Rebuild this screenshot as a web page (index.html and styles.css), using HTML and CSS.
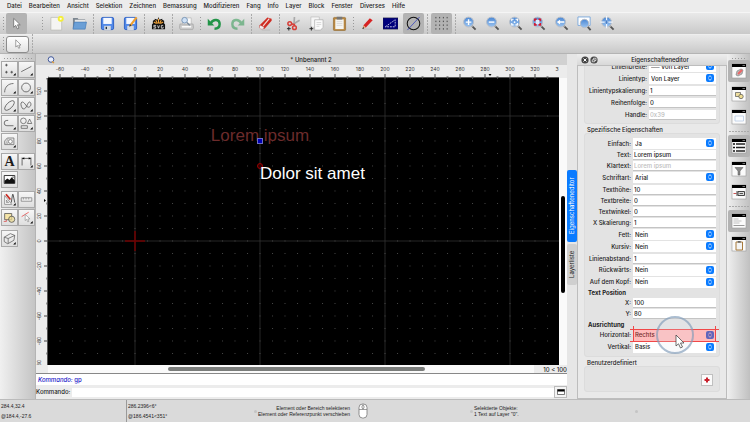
FILE: index.html
```html
<!DOCTYPE html>
<html lang="de">
<head>
<meta charset="utf-8">
<title>Unbenannt 2</title>
<link rel="stylesheet" href="styles.css">
</head>
<body>
<svg class="defs" aria-hidden="true">
  <defs>
    <linearGradient id="lens" x1="0" y1="0" x2="0" y2="1"><stop offset="0" stop-color="#4a87d4"/><stop offset="1" stop-color="#9cc4f0"/></linearGradient>
    <symbol id="cursor" viewBox="0 0 16 16"><path d="M5 2.500v9.500l2.200-2 1.700 3.700 1.700-.8L9 9.400h3z" fill="#fff" stroke="#666" stroke-width=".8"/></symbol>
    <symbol id="mag" viewBox="0 0 16 16"><path d="M10.500 10.500l4 4" stroke="#555" stroke-width="2"/><path d="M10 10l1.500 1.500" stroke="#aaa" stroke-width="1.500"/><circle cx="7" cy="6.500" r="5.300" fill="url(#lens)" stroke="#b9bdc4" stroke-width="1"/></symbol>
    <symbol id="updown" viewBox="0 0 8 8"><path d="M2.300 3.300L4 1.700l1.700 1.600M2.300 4.700L4 6.300l1.700-1.600" fill="none" stroke="#fff" stroke-width=".8"/></symbol>
    <symbol id="win" viewBox="0 0 16 16"><rect x="1" y="1" width="14" height="14" fill="#fbfbfb" stroke="#999" stroke-width=".6"/><path d="M1 1h14v3H1z" fill="#000"/><path d="M11.500 2.500h2.500" stroke="#777"/></symbol>
    <symbol id="corner" viewBox="0 0 17 17"><path d="M15.500 12.500v2.800h-2.800z" fill="#000"/></symbol>
    <symbol id="close" viewBox="0 0 8 8"><circle cx="4" cy="4" r="3.600" fill="#444"/><path d="M2.500 2.500l3 3m0-3l-3 3" stroke="#fff" stroke-width="1"/></symbol>
  </defs>
</svg>

<nav class="menubar" aria-label="Menü">
  <a href="#">Datei</a><a href="#">Bearbeiten</a><a href="#">Ansicht</a><a href="#">Selektion</a><a href="#">Zeichnen</a><a href="#">Bemassung</a><a href="#">Modifizieren</a><a href="#">Fang</a><a href="#">Info</a><a href="#">Layer</a><a href="#">Block</a><a href="#">Fenster</a><a href="#">Diverses</a><a href="#">Hilfe</a>
</nav>

<div class="toolbar">
  <i class="grip"></i>
  <button class="tool active" aria-label="Auswahl"><svg viewBox="0 0 16 16"><use href="#cursor"/></svg></button>
  <i class="grip later"></i>
  <button class="tool" aria-label="Neu"><svg viewBox="0 0 16 16"><path d="M2 1.500h11.500v13.500H2z" fill="#f5f5f2" stroke="#b5b5b0" stroke-width=".7"/><circle cx="12.500" cy="3" r="3.200" fill="#f4ee3a"/><circle cx="12.500" cy="3" r="1.200" fill="#fffde0"/></svg></button>
  <button class="tool" aria-label="Öffnen"><svg viewBox="0 0 16 16"><path d="M1 2h5l1 1.500h7V13H1z" fill="#7d8790"/><path d="M3 4h11v4H3z" fill="#e8e8e8"/><path d="M2.500 6.500H15.500L14 14H1z" fill="#6b9fd6" stroke="#3c74b0" stroke-width=".6"/></svg></button>
  <i class="sep"></i>
  <button class="tool" aria-label="Speichern"><svg viewBox="0 0 16 16"><rect x="1.500" y="1.500" width="13" height="13" rx="1.500" fill="#5289e8" stroke="#2c5fc4"/><path d="M3.500 2h9v6.500h-9z" fill="#f5f8ff"/><path d="M4.500 10.500h7V15h-7z" fill="#d5dae2"/><path d="M6 11.500h1.500V14H6z" fill="#234"/></svg></button>
  <button class="tool" aria-label="Speichern unter"><svg viewBox="0 0 16 16"><rect x="1.500" y="1.500" width="13" height="13" rx="1.500" fill="#5289e8" stroke="#2c5fc4"/><path d="M3.500 2h9v6.500h-9z" fill="#f5f8ff"/><path d="M4.500 10.500h7V15h-7z" fill="#d5dae2"/><path d="M14.500 1.500L7.500 10.500" stroke="#f0a030" stroke-width="2.400"/><path d="M7.500 8.500l-1 3 2.500-1.500z" fill="#333"/></svg></button>
  <i class="sep"></i>
  <button class="tool" aria-label="SVG-Export"><svg viewBox="0 0 16 16"><path d="M2 8V5l2-1V3l3 1 1-3 1 3 3-1v1l2 1v3l1 1v5H1V9z" fill="#111"/><path d="M8 3v5M5 4.500L7 8M11 4.500L9 8M3 6.500l3 1.500M13 6.500L10 8" stroke="#f3a53a" stroke-width="1.200"/><path d="M5.500 10H3v1.500h2V13H2.500M7 10l1 3 1-3M13 10h-2v3h2v-1.500" fill="none" stroke="#ddd" stroke-width=".9"/></svg></button>
  <i class="sep"></i>
  <button class="tool" aria-label="Druckvorschau"><svg viewBox="0 0 16 16"><path d="M4 2h9v7H4z" fill="#fafafa" stroke="#aaa" stroke-width=".6"/><path d="M1 8.500h14l.5 4-1 2h-13l-1-2z" fill="#c9c9c9" stroke="#999" stroke-width=".6"/><path d="M3 11.500h10" stroke="#fff" stroke-width="1.500"/><circle cx="6" cy="4.500" r="3" fill="#cfe1f5" stroke="#7795b8"/><path d="M8.500 7l3 3" stroke="#789" stroke-width="1.500"/></svg></button>
  <i class="grip"></i>
  <button class="tool" aria-label="Rückgängig"><svg viewBox="0 0 16 16"><path d="M4 7.500C7 2.500 13.500 3.500 13.500 8.500c0 3-2 5-5.500 5" fill="none" stroke="#229447" stroke-width="2.600"/><path d="M.8 3v7h7z" fill="#229447"/></svg></button>
  <button class="tool faded" aria-label="Wiederherstellen"><svg viewBox="0 0 16 16"><path d="M12 7.500C9 2.500 2.500 3.500 2.500 8.500c0 3 2 5 5.500 5" fill="none" stroke="#229447" stroke-width="2.600"/><path d="M15.200 3v7h-7z" fill="#229447"/></svg></button>
  <i class="sep"></i>
  <button class="tool" aria-label="Löschen"><svg viewBox="0 0 16 16"><path d="M4 15h9" stroke="#bbb" stroke-width="1"/><path d="M10 1.500l4.500 1.500v2L7 13.500H3L1.500 12v-2z" fill="#cf2c22"/><path d="M12 2.800L5.500 10.500" stroke="#f3dcd8" stroke-width="1.300"/><path d="M2 9.800l4.500 1.800L5.500 14H3l-1.500-1.500z" fill="#f0eeee" stroke="#b66" stroke-width=".4"/></svg></button>
  <i class="sep"></i>
  <button class="tool" aria-label="Ausschneiden"><svg viewBox="0 0 16 16"><path d="M9 1L8.500 9M14.500 4.500L7 9" stroke="#aaa" stroke-width="1.800"/><circle cx="4" cy="8" r="2" fill="none" stroke="#d6403a" stroke-width="1.600"/><circle cx="9" cy="12.500" r="2" fill="none" stroke="#d6403a" stroke-width="1.600"/><path d="M6 8.500l3 .5v2" fill="none" stroke="#d6403a" stroke-width="1.500"/><path d="M3 11.500v4M1 13.500h4" stroke="#222" stroke-width="1"/></svg></button>
  <button class="tool" aria-label="Kopieren"><svg viewBox="0 0 16 16"><path d="M2 1h9v11H2z" fill="#f6f6f6" stroke="#bbb" stroke-width=".7"/><path d="M6 4h9v8l-2.500 3H6z" fill="#fbfbfb" stroke="#aaa" stroke-width=".7"/><path d="M8 7h5M8 9h5M8 11h3" stroke="#ccc" stroke-width=".8"/><path d="M2.500 11.500v4M.5 13.500h4" stroke="#222" stroke-width="1"/></svg></button>
  <button class="tool" aria-label="Einfügen"><svg viewBox="0 0 16 16"><rect x="1.500" y="1.500" width="13" height="14" rx="1" fill="#b8863f" stroke="#8c6226" stroke-width=".6"/><path d="M3.500 3.500h9v10.500h-9z" fill="#f5f5f2"/><path d="M5 .8h6v3H5z" fill="#777"/><path d="M5 6h6M5 8h6M5 10h6" stroke="#ccc" stroke-width=".7"/></svg></button>
  <i class="grip"></i>
  <button class="tool" aria-label="Stift"><svg viewBox="0 0 16 16"><path d="M3 14h10" stroke="#bbb"/><path d="M10.500 2.500l3 2-7 7.500-3.500 1 1-3.500z" fill="#d62222"/><path d="M4 10l-1.300 3.500L6 12z" fill="#e9c08a"/><path d="M3.300 11.800l-.8 2 2-.8z" fill="#111"/></svg></button>
  <button class="tool" aria-label="Entwurf"><svg viewBox="0 0 16 16"><path d="M0 2h16v12H0z" fill="#00007c" stroke="#223" stroke-width=".5"/><path d="M2.500 11.500L13 4v7.500z" fill="none" stroke="#dde" stroke-width=".9" stroke-dasharray="2 1"/></svg></button>
  <button class="tool active" aria-label="Hilfslinien"><svg viewBox="0 0 16 16"><circle cx="8" cy="8" r="6.700" fill="none" stroke="#111" stroke-width="1.100"/><path d="M1.500 15L14.500 1" stroke="#3340c0" stroke-width=".8"/></svg></button>
  <i class="sep"></i>
  <button class="tool active" aria-label="Raster"><svg viewBox="0 0 16 16"><path d="M2 1v15M6 1v15M10 1v15M14 1v15" stroke="#444" stroke-width="1" stroke-dasharray="1.500 2.500"/></svg></button>
  <i class="sep"></i>
  <button class="tool" aria-label="Vergrößern"><svg viewBox="0 0 16 16"><use href="#mag"/><path d="M7 3.500v6M4 6.500h6" stroke="#fff" stroke-width="1.500"/></svg></button>
  <button class="tool" aria-label="Verkleinern"><svg viewBox="0 0 16 16"><use href="#mag"/><path d="M4 6.500h6" stroke="#fff" stroke-width="1.500"/></svg></button>
  <button class="tool" aria-label="Auto-Zoom"><svg viewBox="0 0 16 16"><use href="#mag"/><path d="M4 5.500v-2h2M8 3.500h2v2M10 7.500v2H8M6 9.500H4v-2" fill="none" stroke="#fff" stroke-width="1.200"/><circle cx="7" cy="6.500" r="1" fill="#fff"/></svg></button>
  <button class="tool" aria-label="Auf Auswahl zoomen"><svg viewBox="0 0 16 16"><use href="#mag"/><path d="M5 4h4v5H5z" fill="#dce9fa"/><path d="M4 5.500v-2h2M8 3.500h2v2M10 7.500v2H8M6 9.500H4v-2" fill="none" stroke="#d31b31" stroke-width="1.700"/></svg></button>
  <button class="tool" aria-label="Vorherige Ansicht"><svg viewBox="0 0 16 16"><use href="#mag"/><path d="M3 6.500l3.500-2.500v1.700H11v1.600H6.500V9z" fill="#fff"/></svg></button>
  <button class="tool" aria-label="Fensterzoom"><svg viewBox="0 0 16 16"><path d="M1 1h13v9H1z" fill="#fff" stroke="#7aa7dc"/><path d="M11.500 11.500l3 3.500" stroke="#555" stroke-width="2"/><circle cx="8" cy="8" r="4.500" fill="url(#lens)" stroke="#b9bdc4"/></svg></button>
  <button class="tool" aria-label="Verschieben"><svg viewBox="0 0 16 16"><use href="#mag"/><path d="M7 0v13M.5 6.500h13" stroke="#eef5ff" stroke-width="1.300"/><path d="M7 4.500v4M5 6.500h4" stroke="#3f78c4" stroke-width="1"/></svg></button>
</div>

<div class="optionbar">
  <i class="grip"></i>
  <button class="mode" aria-label="Auswahlmodus"><svg viewBox="0 0 16 16"><use href="#cursor"/></svg></button>
  <i class="sep"></i>
</div>

<div class="workspace">
  <aside class="palette" aria-label="Werkzeuge">
    <i class="hgrip"></i>
    <div class="set">
      <button aria-label="Punkt"><svg viewBox="0 0 17 17"><path d="M5 2v3M3.500 3.500h3M5 10v3M3.500 11.500h3M11 10v3M9.500 11.500h3" stroke="#333" stroke-width=".8"/><use href="#corner"/></svg></button>
      <button aria-label="Linie"><svg viewBox="0 0 17 17"><path d="M2.500 11L14 5" stroke="#444" stroke-width=".8"/><use href="#corner"/></svg></button>
      <button aria-label="Bogen"><svg viewBox="0 0 17 17"><path d="M3 14C3 8 7 4 13 4" fill="none" stroke="#555" stroke-width=".9"/><use href="#corner"/></svg></button>
      <button aria-label="Kreis"><svg viewBox="0 0 17 17"><circle cx="8" cy="8.500" r="5" fill="none" stroke="#555" stroke-width=".9"/><use href="#corner"/></svg></button>
      <button aria-label="Ellipse"><svg viewBox="0 0 17 17"><ellipse cx="8.500" cy="8.500" rx="7" ry="3.200" transform="rotate(-45 8.500 8.500)" fill="none" stroke="#555" stroke-width=".9"/><use href="#corner"/></svg></button>
      <button aria-label="Spline"><svg viewBox="0 0 17 17"><path d="M4 12C1 8 2 3 5 5s4 7 7 5 1-7-1-5-3 9-7 7z" fill="none" stroke="#555" stroke-width=".9"/><use href="#corner"/></svg></button>
      <button aria-label="Polylinie"><svg viewBox="0 0 17 17"><path d="M7 5H5.500a3 3 0 0 0 0 6H13" fill="none" stroke="#555" stroke-width=".9"/><use href="#corner"/></svg></button>
      <button aria-label="Form"><svg viewBox="0 0 17 17"><circle cx="5" cy="5.500" r="3.200" fill="none" stroke="#555" stroke-width=".8"/><path d="M9.500 8.500l2.500-5 2.500 5zM2.500 11h7v3h-7z" fill="none" stroke="#555" stroke-width=".8"/><use href="#corner"/></svg></button>
      <button aria-label="Schraffur"><svg viewBox="0 0 17 17"><path d="M3 12V8l3-3.500h7.500V12z" fill="#e6e6e6" stroke="#666" stroke-width=".8"/><circle cx="9.500" cy="8.500" r="2.200" fill="#fff" stroke="#666" stroke-width=".8"/><path d="M4 12l3-7M5.500 12l1.500-3" stroke="#888" stroke-width=".6"/><use href="#corner"/></svg></button>
    </div>
    <div class="set">
      <button class="letter" aria-label="Text">A</button>
      <button aria-label="Bemaßung"><svg viewBox="0 0 17 17"><path d="M3.500 4v9M13.500 4v9M3.500 5h10" stroke="#333" stroke-width=".8"/><path d="M3.500 5l2.500-1.300v2.600zM13.500 5L11 3.700v2.600z"/><use href="#corner"/></svg></button>
      <button aria-label="Bild"><svg viewBox="0 0 17 17"><path d="M2.500 4h12v9h-12z" fill="#fff" stroke="#222" stroke-width="1"/><path d="M3 12.500V10l3-2.500 2.500 1.500L11 6l3.500 3.500v3z" fill="#111"/><circle cx="12.500" cy="5.800" r=".8" fill="#111"/></svg></button>
    </div>
    <div class="set">
      <button aria-label="Ändern"><svg viewBox="0 0 17 17"><path d="M3 4v10h8zM5 9v3h2.500z" fill="#fff" stroke="#666" stroke-width=".7"/><path d="M4.500 2.500l5 6" stroke="#c92b22" stroke-width="2"/><path d="M12 2.500L10.500 12M12.500 2.500L14.500 12" stroke="#333" stroke-width=".9"/><use href="#corner"/></svg></button>
      <button aria-label="Messen"><svg viewBox="0 0 17 17"><path d="M2.500 6.500h12v4h-12z" fill="#eee" stroke="#777" stroke-width=".8"/><path d="M5 6.500v2M8 6.500v2M11 6.500v2" stroke="#777" stroke-width=".7"/></svg></button>
      <button aria-label="Block"><svg viewBox="0 0 17 17"><path d="M3 4h8v7H3z" fill="#f5e5a8" stroke="#444" stroke-width=".8"/><circle cx="11" cy="10.500" r="3.500" fill="#eedd92" fill-opacity=".7" stroke="#444" stroke-width=".8"/><path d="M2 13h3v-2" stroke="#d44" fill="none" stroke-width=".8"/></svg></button>
      <button aria-label="Auswahlwerkzeuge"><svg viewBox="0 0 17 17"><path d="M3 7.500L11 2.500" stroke="#e33" stroke-width=".8"/><path d="M7 5v7l1.700-1.500 1.300 3 1.300-.6-1.300-2.800h2.500z" fill="#fff" stroke="#888" stroke-width=".7"/><use href="#corner"/></svg></button>
    </div>
    <div class="set last">
      <button aria-label="Isometrie"><svg viewBox="0 0 17 17"><path d="M2.500 7l7-4 5 2-1 5.500-7 4-4-2.500zM2.500 7l4.500 1.500 7.500-3.500M7 8.500v5.500" fill="none" stroke="#555" stroke-width=".8"/><use href="#corner"/></svg></button>
    </div>
  </aside>

  <main class="document">
    <header class="doctitle">
      <svg viewBox="0 0 8 8"><circle cx="4" cy="3.500" r="2.800" fill="#e8eefc" stroke="#334b8f" stroke-width=".9"/><path d="M5 5.500l2 1.500" stroke="#e09a32" stroke-width="1.200"/></svg>
      <h1>* Unbenannt 2</h1>
    </header>
    <div class="view">
      <svg class="hruler" aria-hidden="true">
        <defs><pattern id="ht" x="86.500" width="25" height="13" patternUnits="userSpaceOnUse"><path d="M.5 9v4M13 11v2" stroke="#444"/></pattern></defs>
        <rect width="511" height="13" fill="url(#ht)" x="0"/>
        <path d="M0 12.500h511" stroke="#555"/>
        <path d="M440.500 9h3l-1.500 2z"/>
        <g class="ticks"><text x="12" y="6">-60</text><text x="37" y="6">-40</text><text x="62" y="6">-20</text><text x="87" y="6">0</text><text x="112" y="6">20</text><text x="137" y="6">40</text><text x="162" y="6">60</text><text x="187" y="6">80</text><text x="212" y="6">100</text><text x="237" y="6">120</text><text x="262" y="6">140</text><text x="287" y="6">160</text><text x="312" y="6">180</text><text x="337" y="6">200</text><text x="362" y="6">220</text><text x="387" y="6">240</text><text x="412" y="6">260</text><text x="437" y="6">280</text><text x="462" y="6">300</text><text x="487" y="6">320</text><text x="509" y="6">3</text></g>
      </svg>
      <svg class="vruler" aria-hidden="true">
        <defs><pattern id="vt" y="162.500" width="12" height="25" patternUnits="userSpaceOnUse"><path d="M8 .5h4M10 13h2" stroke="#444"/></pattern></defs>
        <rect width="12" height="100%" fill="url(#vt)"/>
        <path d="M11.500 0v600" stroke="#555"/>
        <path d="M8 121l2 1.500-2 1.500z"/>
        <g class="ticks"><text transform="translate(5 13) rotate(-90)">120</text><text transform="translate(5 38) rotate(-90)">100</text><text transform="translate(5 63) rotate(-90)">80</text><text transform="translate(5 88) rotate(-90)">60</text><text transform="translate(5 113) rotate(-90)">40</text><text transform="translate(5 138) rotate(-90)">20</text><text transform="translate(5 163) rotate(-90)">0</text><text transform="translate(5 188) rotate(-90)">-20</text><text transform="translate(5 213) rotate(-90)">-40</text><text transform="translate(5 238) rotate(-90)">-60</text><text transform="translate(5 263) rotate(-90)">-80</text><text transform="translate(5 285) rotate(-90)">30</text></g>
      </svg>
      <svg class="drawing" role="img" aria-label="Zeichnung">
        <defs>
          <pattern id="dots" x="86.500" y="162.500" width="12.500" height="12.500" patternUnits="userSpaceOnUse"><path d="M0 0h1v1H0z" fill="#484848"/></pattern>
          <pattern id="meta" x="86" y="162" width="125" height="125" patternUnits="userSpaceOnUse"><path d="M0 1h125M1 0v125" stroke="#131313" stroke-width="2"/></pattern>
        </defs>
        <rect width="100%" height="100%" fill="#000"/>
        <rect width="100%" height="100%" fill="url(#meta)"/>
        <rect width="100%" height="100%" fill="url(#dots)"/>
        <path d="M77 163h20M87 153v20" stroke="#720000" stroke-width="1.500"/>
        <text class="cad selected" x="212" y="63" text-anchor="middle">Lorem ipsum</text>
        <rect x="209.500" y="60.500" width="5" height="5" fill="#0000b4" stroke="#6d6dc0"/>
        <circle cx="212" cy="88" r="2.500" fill="#300" stroke="#9c0000"/>
        <text class="cad" x="212" y="101">Dolor sit amet</text>
      </svg>
      <div class="vscroll"><i></i></div>
      <div class="hscroll"><div class="track"><i></i></div><span>10 &lt; 100</span></div>
    </div>
    <div class="console">
      <p class="history"><em>Kommando:</em> gp</p>
      <div class="prompt">
        <label for="cmd">Kommando:</label><input id="cmd" type="text">
        <button aria-label="Verlauf"><svg viewBox="0 0 8 8"><path d="M.5 1.500h7v5h-7z" fill="#fff" stroke="#444" stroke-width=".7"/><path d="M.5 1.500h7v2h-7z"/></svg></button>
      </div>
    </div>
  </main>

  <div class="docktabs">
    <button class="current">Eigenschafteneditor</button>
    <button>Layerliste</button>
  </div>

  <section class="editor">
    <header>
      <button aria-label="Schließen"><svg viewBox="0 0 8 8"><use href="#close"/></svg></button>
      <button aria-label="Abdocken"><svg viewBox="0 0 8 8"><circle cx="4" cy="4" r="3.600" fill="#444"/><path d="M2.200 3.800h2.500v2H2.200zM3.500 3.500V2.200h2.500v2.300h-1" fill="none" stroke="#fff" stroke-width=".7"/></svg></button>
      <h2>Eigenschafteneditor</h2>
    </header>
    <div class="scroll">
      <div class="group general">
        <label for="lw">Linienbreite:</label><div class="pick"><select id="lw"><option>── Von Layer</option></select><svg viewBox="0 0 8 8"><use href="#updown"/></svg></div>
        <label for="lt">Linientyp:</label><div class="pick"><select id="lt"><option>Von Layer</option></select><svg viewBox="0 0 8 8"><use href="#updown"/></svg></div>
        <label for="ls">Linientypskalierung:</label><input id="ls" value="1">
        <label for="or">Reihenfolge:</label><input id="or" value="0">
        <label for="ha">Handle:</label><input id="ha" placeholder="0x39">
      </div>
      <h3>Spezifische Eigenschaften</h3>
      <div class="group specific">
        <label for="f1">Einfach:</label><div class="pick"><select id="f1"><option>Ja</option></select><svg viewBox="0 0 8 8"><use href="#updown"/></svg></div>
        <label for="f2">Text:</label><input id="f2" value="Lorem ipsum">
        <label for="f3">Klartext:</label><input id="f3" placeholder="Lorem ipsum">
        <label for="f4">Schriftart:</label><div class="pick"><select id="f4"><option>Arial</option></select><svg viewBox="0 0 8 8"><use href="#updown"/></svg></div>
        <label for="f5">Texthöhe:</label><input id="f5" value="10">
        <label for="f6">Textbreite:</label><input id="f6" value="0">
        <label for="f7">Textwinkel:</label><input id="f7" value="0">
        <label for="f8">X Skalierung:</label><input id="f8" value="1">
        <label for="f9">Fett:</label><div class="pick"><select id="f9"><option>Nein</option></select><svg viewBox="0 0 8 8"><use href="#updown"/></svg></div>
        <label for="f10">Kursiv:</label><div class="pick"><select id="f10"><option>Nein</option></select><svg viewBox="0 0 8 8"><use href="#updown"/></svg></div>
        <label for="f11">Linienabstand:</label><input id="f11" value="1">
        <label for="f12">Rückwärts:</label><div class="pick"><select id="f12"><option>Nein</option></select><svg viewBox="0 0 8 8"><use href="#updown"/></svg></div>
        <label for="f13">Auf dem Kopf:</label><div class="pick"><select id="f13"><option>Nein</option></select><svg viewBox="0 0 8 8"><use href="#updown"/></svg></div>
        <h4>Text Position</h4>
        <label for="f14">X:</label><input id="f14" value="100">
        <label for="f15">Y:</label><input id="f15" value="80">
        <h4>Ausrichtung</h4>
        <label for="f16">Horizontal:</label><div class="pick marked"><select id="f16"><option>Rechts</option></select><svg viewBox="0 0 8 8"><use href="#updown"/></svg>
          <span class="frame"></span>
          <svg class="pointer" viewBox="0 0 40 40" aria-hidden="true"><circle cx="20" cy="20" r="18" fill="#dfe6ee" fill-opacity=".2" stroke="#7f9bb8" stroke-opacity=".65" stroke-width="2"/><path d="M21 20v11l2.500-2.200 2 4.200 2-1-2-4h3.500z" fill="#fff" stroke="#333" stroke-width=".7"/></svg></div>
        <label for="f17">Vertikal:</label><div class="pick"><select id="f17"><option>Basis</option></select><svg viewBox="0 0 8 8"><use href="#updown"/></svg></div>
      </div>
      <h3>Benutzerdefiniert</h3>
      <div class="group custom"><button aria-label="Hinzufügen"><svg viewBox="0 0 8 8"><path d="M4 1.500v5M1.500 4h5" stroke="#c8202c" stroke-width="2"/></svg></button></div>
    </div>
  </section>

  <aside class="docks" aria-label="Fenster">
    <i class="hgrip"></i>
    <button class="active" aria-label="Eigenschaften"><svg viewBox="0 0 16 16"><use href="#win"/><path d="M5 12l1-4 4-2 2 1-1 4-4 2z" fill="#bbb" stroke="#777" stroke-width=".6"/><path d="M7 11l4-4" stroke="#e66" stroke-width="2"/></svg></button>
    <button aria-label="Blöcke"><svg viewBox="0 0 16 16"><use href="#win"/><path d="M4.500 6.500h5v4h-5z" fill="#f0dfa0" stroke="#555" stroke-width=".7"/><circle cx="10" cy="10.500" r="2.200" fill="#eedd92" stroke="#555" stroke-width=".7"/></svg></button>
    <button aria-label="Ansicht"><svg viewBox="0 0 16 16"><use href="#win"/><path d="M4 7h8.500v5H4z" fill="#fafcff" stroke="#b9cbe4" stroke-width=".8"/></svg></button>
    <i class="rule"></i>
    <button class="active" aria-label="Layerliste"><svg viewBox="0 0 16 16"><use href="#win"/><path d="M2 6h2M2 9.500h2M2 13h2" stroke="#111" stroke-width="1.500"/><path d="M5 6h9M5 9.500h9M5 13h9" stroke="#222" stroke-width="1.600"/></svg></button>
    <button aria-label="Filter"><svg viewBox="0 0 16 16"><use href="#win"/><path d="M4 6.500h8l-3 3.500v4H7v-4z" fill="#888" stroke="#555" stroke-width=".5"/></svg></button>
    <button aria-label="Bibliothek"><svg viewBox="0 0 16 16"><use href="#win"/><path d="M2.500 9.500h3" stroke="#c55"/><path d="M6 7v5M7 7.500h6.500v4H7z" fill="#ddd" stroke="#333" stroke-width=".9"/><path d="M8.500 9.500h3.500" stroke="#555"/></svg></button>
    <i class="rule"></i>
    <button class="active" aria-label="Kommandozeile"><svg viewBox="0 0 16 16"><use href="#win"/><path d="M2.500 6h5M2.500 8h8M2.500 10h6" stroke="#aaa" stroke-width=".7"/><path d="M2.500 12.500h11" stroke="#999" stroke-width="1"/></svg></button>
    <button aria-label="Zwischenablage"><svg viewBox="0 0 16 16"><use href="#win"/><path d="M5 6h6.500v8H5z" fill="#f4f4f4" stroke="#a87a3b" stroke-width="1"/><path d="M6.700 5h3v1.700h-3z" fill="#666"/></svg></button>
  </aside>
</div>

<footer class="status">
  <div><p>284.4,32.4</p><p>@184.4,-27.6</p></div>
  <div class="polar"><p>286.2396&lt;6°</p><p>@186.4541&lt;351°</p></div>
  <div class="hint"><i class="dot"></i><div><p>Element oder Bereich selektieren</p><p>Element oder Referenzpunkt verschieben</p></div>
    <svg viewBox="0 0 10 16"><rect x="1" y="1" width="8" height="14" rx="3.500" fill="#fff" stroke="#777" stroke-width=".8"/><path d="M1 6.500h8M5 1v5.500" stroke="#777" stroke-width=".7"/><rect x="4" y="2.500" width="2" height="3" rx="1" fill="#fff" stroke="#555" stroke-width=".6"/></svg></div>
  <div class="hint"><i class="dot"></i><div class="start"><p>Selektierte Objekte:</p><p>1 Text auf Layer "0".</p></div></div>
  <div class="hint"><i class="dot"></i></div>
</footer>
</body>
</html>
```
FILE: styles.css
```css
* { box-sizing: border-box; }
body {
  margin: 0;
  min-height: 100vh;
  display: flex;
  flex-direction: column;
  background: #ececec;
  color: #1c1c1c;
  font: 6px/8px Inter, "Liberation Sans", sans-serif;
}
h1, h2, h3, h4, p { margin: 0; font-size: inherit; font-weight: 500; }
button, input, select { font: inherit; color: inherit; margin: 0; padding: 0; border: 0; border-radius: 0; background: none; }
button { display: flex; align-items: center; justify-content: center; }
svg { display: block; }
.defs { position: absolute; width: 0; height: 0; }

.menubar { display: flex; gap: 7px; height: 12px; padding: 2px 7px 0; font-weight: 500; }
.menubar a { color: inherit; text-decoration: none; }

.toolbar, .optionbar {
  display: flex;
  align-items: center;
  gap: 2px;
  padding-left: 3px;
  background: linear-gradient(#e9e9e9, #c9c9c9);
}
.toolbar { height: 22px; border-top: 1px solid #f5f5f5; }
.optionbar { height: 20px; border-bottom: 1px solid #b4b4b4; border-top: 1px solid #eee; }
.grip { width: 3px; height: 14px; background: repeating-linear-gradient(#999 0 1px, transparent 1px 3px) center / 1px 100% no-repeat; }
.toolbar .grip:first-child, .optionbar .grip { width: 1px; }
.later { margin-left: 12px; }
.sep { width: 3px; height: 20px; background: repeating-linear-gradient(#aaa 0 2px, transparent 2px 3px) center / 1px 100% no-repeat; }
.tool { width: 21px; height: 21px; border-radius: 2px; flex: none; }
.tool svg { width: 15px; height: 15px; }
.active { background: #b3b3b3; }
.faded { opacity: .5; }
.mode { width: 23px; height: 17px; border: 1px solid #8c8c8c; border-radius: 3px; background: linear-gradient(#fff, #e2e2e2); }
.mode svg { width: 12px; height: 12px; }

.workspace { flex: 1; display: grid; grid-template-columns: 36px minmax(0, 1fr) 10px 150px 23px; }

.palette { background: linear-gradient(90deg, #f0f0f0, #c4c4c4); border-right: 1px solid #b4b4b4; padding: 4px 0 0 1px; }
.hgrip { display: block; height: 1px; margin: 0 3px 2px; background: repeating-linear-gradient(90deg, #999 0 1px, transparent 1px 3px); }
.set { display: grid; grid-template-columns: 17px 17px; gap: 1px 0; margin-bottom: 3px; }
.set.last { margin-top: 4px; }
.set button { height: 17px; border: 1px solid #a9a9a9; background: linear-gradient(#f7f7f7, #dedede); }
.set svg { width: 15px; height: 15px; }
.set .letter { font: bold 14px/15px "Liberation Serif", serif; }

.document { display: flex; flex-direction: column; min-width: 0; }
.doctitle { display: flex; align-items: center; height: 11px; padding-left: 11px; background: #d1d1d1; }
.doctitle svg { width: 8px; height: 8px; }
.doctitle h1 { flex: 1; text-align: center; }
.view { flex: 1; display: grid; grid-template: 13px minmax(0, 1fr) 8px / 12px minmax(0, 1fr) 8px; background: #ececec; }
.hruler { grid-area: 1 / 2; width: 100%; height: 13px; }
.vruler { grid-area: 2 / 1; width: 12px; height: 100%; }
.drawing { grid-area: 2 / 2; width: 100%; height: 100%; }
.ticks { font-size: 5px; text-anchor: middle; fill: #333; }
.cad { font: 17px "Liberation Sans", Arial, sans-serif; fill: #fff; }
.cad.selected { fill: #6c2b2b; }
.vscroll { grid-area: 2 / 3; display: flex; flex-direction: column; padding: 118px 2px 72px; background: #fafafa; }
.vscroll i { flex: 1; border-radius: 2px; background: #000; }
.hscroll { grid-area: 3 / 2 / 4 / 4; display: flex; justify-content: space-between; white-space: nowrap; }
.track { flex: 1; padding: 2px 109px 2px 120px; background: #fafafa; }
.track i { display: block; height: 4px; border-radius: 2px; background: #7b7d7b; }
.hscroll span { padding: 1px 0 0 9px; line-height: 7px; font-weight: 500; }

.console { border-top: 1px solid #888; font-weight: 500; }
.history { height: 11px; padding: 2px 2px 1px; background: #fff; color: #1b16c8; }
.prompt { display: flex; align-items: center; height: 14px; }
.prompt label { padding-right: 2px; }
.prompt input { flex: 1; height: 9px; min-width: 0; background: #fff; }
.prompt button { width: 13px; height: 12px; border: 1px solid #bbb; background: #f4f4f4; }
.prompt svg { width: 8px; height: 8px; }

.docktabs { display: flex; flex-direction: column; gap: 2px; padding-top: 116px; background: #e6e6e6; }
.docktabs button { width: 10px; height: 41px; border-radius: 2px; writing-mode: vertical-rl; transform: rotate(180deg); background: #cfcfcf; }
.docktabs .current { height: 72px; background: #0a7bff; color: #fff; }

.editor { display: flex; flex-direction: column; min-width: 0; }
.editor header { display: flex; align-items: center; gap: 1px; height: 11px; padding-left: 4px; background: linear-gradient(#eee, #d8d8d8); }
.editor header svg { width: 8px; height: 8px; }
.editor h2 { flex: 1; padding-right: 6px; text-align: center; }
.scroll { flex: 1; display: flex; flex-direction: column; overflow: hidden; padding: 0 6px 6px; border: 1px solid #bdbdbd; background: #e9e9e9; }
.scroll h3 { height: 7px; margin-top: 2px; padding-left: 3px; }
.group { border: 1px solid #dcdcdc; border-radius: 3px; background: #e3e3e3; padding: 4px 3px 3px; }
.general, .specific { display: grid; column-gap: 2px; align-items: center; text-align: right; font-weight: 500; }
.general { grid-template-columns: 59px minmax(0, 1fr); grid-auto-rows: 11px; row-gap: 1px; margin-top: -6px; padding-top: 0; }
.specific { flex: 1; grid-template-columns: 43px minmax(0, 1fr); align-content: space-between; }
.group label { white-space: nowrap; }
.group input { width: 100%; height: 10px; padding-left: 1px; background: #fff; border-bottom: 1px solid #c4c4c4; }
.group input::placeholder { color: #bdbdbd; opacity: 1; }
.pick { position: relative; height: 11px; text-align: left; }
.pick select { appearance: none; display: block; width: 100%; height: 11px; padding-left: 2px; background: #fff; }
.pick svg { position: absolute; right: 2px; top: 1px; width: 8px; height: 8px; border-radius: 2px; background: #0a7bff; pointer-events: none; }
.frame { position: absolute; inset: -1px 0; background: rgb(255 60 60 / .35); border: 1px solid #f04848; }
.frame::before, .frame::after { content: ""; position: absolute; background: none; }
.frame::before { inset: -1px -4px; border: solid #f04848; border-width: 1px 0; }
.frame::after { inset: -4px -1px; border: solid #f04848; border-width: 0 1px; }
.pick .pointer { right: 21px; top: -15px; width: 40px; height: 40px; background: none; z-index: 1; }
.specific h4 { grid-column: 1 / -1; height: 8px; text-align: left; font-weight: 700; }
.custom { height: 26px; display: flex; justify-content: flex-end; align-items: center; padding-right: 6px; }
.custom button { width: 12px; height: 12px; border: 1px solid #c0c0c0; background: #fafafa; }
.custom svg { width: 8px; height: 8px; }

.docks { display: flex; flex-direction: column; align-items: center; gap: 1px; padding-top: 4px; background: linear-gradient(90deg, #f0f0f0, #c0c0c0); }
.docks .hgrip { width: 14px; margin: 0; flex: none; }
.docks button { width: 22px; height: 22px; flex: none; border-radius: 2px; }
.docks svg { width: 16px; height: 16px; }
.rule { width: 20px; height: 1px; margin: 2px 0; background: repeating-linear-gradient(90deg, #aaa 0 2px, transparent 2px 3px); }

.status { display: grid; grid-template-columns: 126fr 128fr 216fr 165fr 115fr; height: 23px; background: #dadada; border-top: 1px solid #bbb; font: 5px/6px "Liberation Sans", sans-serif; white-space: nowrap; }
.status > div { padding: 3px 1px; }
.status > div:not(.hint) { display: flex; flex-direction: column; justify-content: space-between; }
.status .polar { border-left: 1px solid #999; }
.status > .hint { display: flex; align-items: center; padding: 0; text-align: right; }
.hint .start { text-align: left; }
.hint svg { width: 10px; height: 16px; margin-left: 8px; }
.dot { width: 3px; height: 3px; margin-right: 1px; border-radius: 50%; background: #c4c4c4; }
```
